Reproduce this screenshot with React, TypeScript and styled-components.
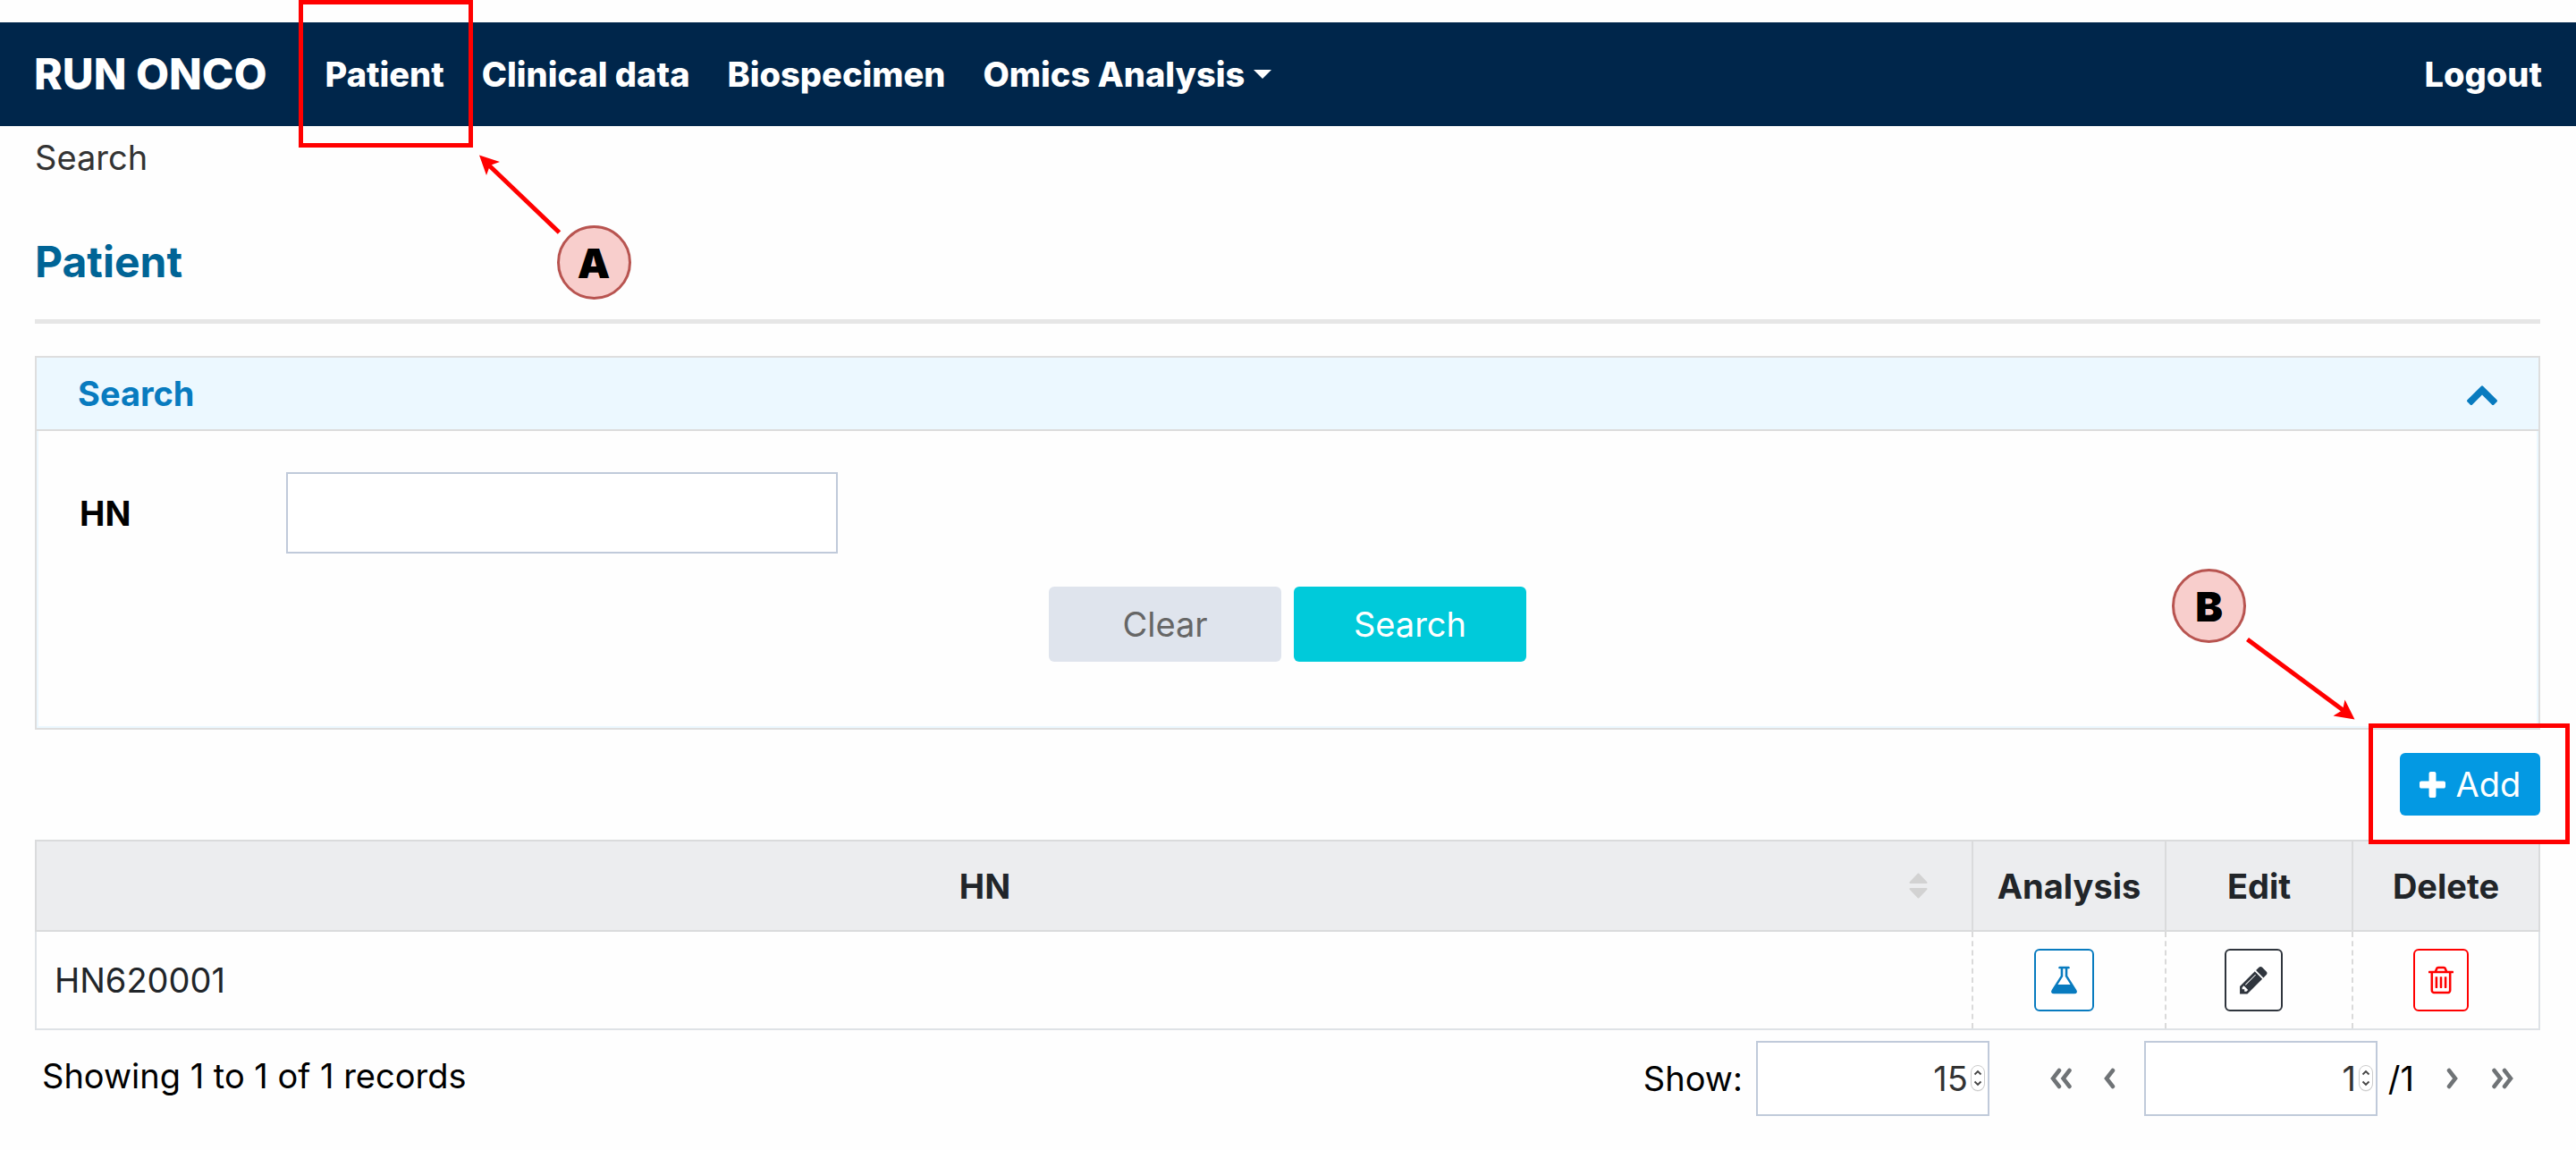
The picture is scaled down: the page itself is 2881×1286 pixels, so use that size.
import React, { useState } from "react";
import styled, { createGlobalStyle } from "styled-components";

const GlobalStyle = createGlobalStyle`
  *, *::before, *::after { box-sizing: border-box; }
  body {
    margin: 0;
    background: #fefefe;
    color: #000;
    font-family: Inter, "Open Sans", "Liberation Sans", sans-serif;
    font-size: 38px;
    line-height: 44px;
  }
  button, input { font: inherit; }
`;

const Page = styled.div`
  padding-top: 25px;
`;

/* ---------- navigation ---------- */

const Navbar = styled.nav`
  display: flex;
  align-items: stretch;
  height: 116px;
  padding: 0 38px;
  background: #00264b;
`;

const NavLink = styled.a`
  display: flex;
  align-items: center;
  gap: 10px;
  color: #fff;
  font-weight: 800;
  text-decoration: none;
  white-space: nowrap;
`;

const Brand = styled(NavLink)`
  margin-right: 65px;
  font-size: 48px;
`;

const NavList = styled.ul`
  display: flex;
  flex: 1;
  gap: 42px;
  margin: 0;
  padding: 0;
  list-style: none;
`;

const NavItem = styled.li<{ $end?: boolean }>`
  position: relative;
  display: flex;
  margin-left: ${(p) => (p.$end ? "auto" : "0")};
`;

const Caret = styled.span`
  border: 10px solid transparent;
  border-top-color: #fff;
  border-bottom: 0;
`;

/* ---------- page body ---------- */

const Content = styled.main`
  padding: 13px 40px 0 39px;
`;

const Breadcrumb = styled.div`
  color: #333;
`;

const Title = styled.h1`
  margin: 69px 0 36px;
  padding-bottom: 38px;
  border-bottom: 5px solid #e6e6e6;
  color: #006496;
  font-size: 48px;
  font-weight: 700;
  line-height: 52px;
`;

const Panel = styled.section`
  border: 2px solid #dedede;
`;

const PanelHeader = styled.header`
  display: flex;
  align-items: center;
  justify-content: space-between;
  height: 82px;
  padding: 0 46px;
  border-bottom: 2px solid #dcdcdc;
  background: #ecf8ff;
  color: #087bbf;
`;

const PanelTitle = styled.h2`
  margin: 0;
  font-size: 38px;
  font-weight: 700;
`;

const PanelToggle = styled.button`
  display: flex;
  padding: 0;
  border: 0;
  background: none;
  color: inherit;
`;

const PanelBody = styled.form`
  padding: 46px 46px 72px;
  border: 2px solid #ecf8ff;
  border-top: 0;
`;

const Field = styled.div`
  display: grid;
  grid-template-columns: 231px 617px;
  align-items: center;
`;

const FieldLabel = styled.label`
  font-weight: 700;
`;

const TextInput = styled.input`
  width: 100%;
  height: 91px;
  padding: 0 20px;
  border: 2px solid #c0cada;
  background: #fff;
  color: #333;
`;

const FormActions = styled.div`
  display: flex;
  justify-content: center;
  gap: 14px;
  margin-top: 37px;
`;

const ActionButton = styled.button<{ $primary?: boolean }>`
  width: 260px;
  height: 84px;
  border: 0;
  border-radius: 6px;
  background: ${(p) => (p.$primary ? "#00cada" : "#dfe4ed")};
  color: ${(p) => (p.$primary ? "#fff" : "#666")};
`;

const Toolbar = styled.div`
  display: flex;
  justify-content: flex-end;
  padding: 26px 0 27px;
`;

const AddSlot = styled.div`
  position: relative;
`;

const AddButton = styled.button`
  display: flex;
  align-items: center;
  justify-content: center;
  gap: 12px;
  width: 157px;
  height: 70px;
  padding: 0;
  border: 0;
  border-radius: 6px;
  background: #0399e3;
  color: #fff;
`;

/* ---------- table ---------- */

const Table = styled.table`
  width: 100%;
  border: 2px solid #dee2e6;
  border-collapse: collapse;
  table-layout: fixed;
  color: #212529;
`;

const Col = styled.col<{ $width?: number }>`
  width: ${(p) => (p.$width ? `${p.$width}px` : "auto")};
`;

const HeadCell = styled.th`
  height: 101px;
  padding: 0;
  border: 2px solid #dadbdc;
  background: #ecedef;
  font-weight: 700;
`;

const SortHeading = styled.div`
  display: flex;
  align-items: center;
  justify-content: space-between;
  padding: 0 49px 0 27px;
`;

const SortLabel = styled.span`
  flex: 1;
`;

const SortButton = styled.button`
  display: flex;
  padding: 0;
  border: 0;
  background: none;
  color: #d2d2d2;
`;

const Cell = styled.td<{ $center?: boolean }>`
  height: 110px;
  padding: 0 20px;
  border-bottom: 2px solid #dee2e6;
  border-right: 2px dashed #dadada;
  text-align: ${(p) => (p.$center ? "center" : "left")};
  &:last-child { border-right: 2px solid #dee2e6; }
`;

const RowActions = styled.div`
  display: flex;
  justify-content: center;
  padding-right: 12px;
`;

const IconButton = styled.button<{ $color: string }>`
  display: flex;
  align-items: center;
  height: 70px;
  padding: 0 15px;
  border: 2px solid ${(p) => p.$color};
  border-radius: 6px;
  background: #fff;
  color: ${(p) => p.$color};
`;

/* ---------- pager ---------- */

const Footer = styled.footer`
  display: flex;
  align-items: flex-start;
  justify-content: space-between;
  padding: 12px 12px 35px 8px;
`;

const Summary = styled.div`
  line-height: 78px;
`;

const Pager = styled.div`
  display: flex;
  align-items: center;
`;

const PagerGroup = styled.div<{ $gap: number }>`
  display: flex;
  align-items: center;
  gap: ${(p) => p.$gap}px;
`;

const Spacer = styled.span<{ $width: number }>`
  width: ${(p) => p.$width}px;
`;

const NumberBox = styled.span`
  position: relative;
  display: flex;
  width: 261px;
`;

const NumberInput = styled.input`
  width: 100%;
  height: 84px;
  padding: 0 22px 0 20px;
  border: 2px solid #c0cada;
  background: #fff;
  color: #333;
  text-align: right;
  appearance: textfield;
  &::-webkit-inner-spin-button { display: none; }
`;

const Stepper = styled.svg`
  position: absolute;
  top: 26px;
  right: 4px;
  pointer-events: none;
`;

const PageButton = styled.button`
  display: flex;
  padding: 18px;
  border: 0;
  background: none;
  color: #6f7376;
`;

/* ---------- guide marks laid over the page ---------- */

const Mark = styled.div<{ $x: number; $y: number; $w: number; $h: number }>`
  position: absolute;
  left: ${(p) => p.$x}px;
  top: ${(p) => p.$y}px;
  width: ${(p) => p.$w}px;
  height: ${(p) => p.$h}px;
  pointer-events: none;
`;

const Outline = styled(Mark)`
  border: 5px solid #f00;
`;

const Badge = styled(Mark)`
  display: flex;
  align-items: center;
  justify-content: center;
  border: 3px solid #b85450;
  border-radius: 50%;
  background: #f8cecc;
  color: #000;
  font-size: 46px;
  font-weight: 900;
`;

const ArrowSvg = styled.svg`
  display: block;
`;

/* ---------- icons ---------- */

type Glyph = { path: string; box: string; width: number; height: number };

const glyphs: Record<string, Glyph> = {
  flask: {
    box: "64 0 1664 1792", width: 33, height: 36,
    path: "M1591 1448q56 89 21.5 152.5t-140.5 63.5h-1152q-106 0-140.5-63.5t21.5-152.5l503-793v-399h-64q-26 0-45-19t-19-45 19-45 45-19h512q26 0 45 19t19 45-19 45-45 19h-64v399zm-779-725l-272 429h712l-272-429-20-31v-436h-128v436z",
  },
  pencil: {
    box: "128 0 1536 1792", width: 31, height: 36,
    path: "M491 1536l91-91-235-235-91 91v107h128v128h107zm523-928q0-22-22-22-10 0-17 7l-542 542q-7 7-7 17 0 22 22 22 10 0 17-7l542-542q7-7 7-17zm-54-192l416 416-832 832h-416v-416zm683 96q0 53-37 90l-166 166-416-416 166-165q36-38 90-38 53 0 91 38l235 234q37 39 37 91z",
  },
  trash: {
    box: "192 0 1408 1792", width: 28, height: 36,
    path: "M704 736v576q0 14-9 23t-23 9h-64q-14 0-23-9t-9-23v-576q0-14 9-23t23-9h64q14 0 23 9t9 23zm256 0v576q0 14-9 23t-23 9h-64q-14 0-23-9t-9-23v-576q0-14 9-23t23-9h64q14 0 23 9t9 23zm256 0v576q0 14-9 23t-23 9h-64q-14 0-23-9t-9-23v-576q0-14 9-23t23-9h64q14 0 23 9t9 23zm128 724v-948h-896v948q0 22 7 40.5t14.5 27 10.5 8.5h832q3 0 10.5-8.5t14.5-27 7-40.5zm-672-1076h448l-48-117q-7-9-17-11h-317q-10 2-17 11zm928 32v64q0 14-9 23t-23 9h-96v948q0 83-47 143.5t-113 60.5h-832q-66 0-113-58.5t-47-141.5v-952h-96q-14 0-23-9t-9-23v-64q0-14 9-23t23-9h309l70-167q15-37 54-63t79-26h320q40 0 79 26t54 63l70 167h309q14 0 23 9t9 23z",
  },
  plus: {
    box: "192 128 1408 1408", width: 29, height: 29,
    path: "M1600 736v192q0 40-28 68t-68 28h-416v416q0 40-28 68t-68 28h-192q-40 0-68-28t-28-68v-416h-416q-40 0-68-28t-28-68v-192q0-40 28-68t68-28h416v-416q0-40 28-68t68-28h192q40 0 68 28t28 68v416h416q40 0 68 28t28 68z",
  },
  chevronUp: {
    box: "90 0 1612 1792", width: 34, height: 38,
    path: "M1683 1331l-166 165q-19 19-45 19t-45-19l-531-531-531 531q-19 19-45 19t-45-19l-166-165q-19-19-19-45.5t19-45.5l742-741q19-19 45-19t45 19l742 741q19 19 19 45.5t-19 45.5z",
  },
};

function Icon({ name }: { name: keyof typeof glyphs }) {
  const g = glyphs[name];
  return (
    <svg width={g.width} height={g.height} viewBox={g.box} fill="currentColor" aria-hidden="true">
      <path d={g.path} />
    </svg>
  );
}

function SortIcon() {
  return (
    <svg width="21" height="29" viewBox="0 0 21 29" fill="currentColor" stroke="currentColor" strokeWidth="2" strokeLinejoin="round" aria-hidden="true">
      <path d="M1.500 11 10.500 1.500 19.500 11z" />
      <path d="M1.500 18 10.500 27.500 19.500 18z" />
    </svg>
  );
}

function Angle({ double, right }: { double?: boolean; right?: boolean }) {
  const w = double ? 24 : 13;
  return (
    <svg width={w} height="24" viewBox={`0 0 ${w} 24`} fill="none" stroke="currentColor" strokeWidth="4.500" strokeLinecap="round" strokeLinejoin="miter" aria-hidden="true">
      <g transform={right ? `translate(${w} 0) scale(-1 1)` : undefined}>
        <path d="M10 3 3 12 10 21" />
        {double && <path d="M21.500 3 14.500 12 21.500 21" />}
      </g>
    </svg>
  );
}

function NumberField({ label, value, onChange }: { label: string; value: number; onChange: (n: number) => void }) {
  return (
    <NumberBox>
      <NumberInput type="number" aria-label={label} value={value} onChange={(e) => onChange(Number(e.target.value))} />
      <Stepper width="18" height="32" viewBox="0 0 18 32" fill="none" aria-hidden="true">
        <rect x="1.500" y="2.500" width="15" height="28" rx="7.500" fill="#bbb" opacity="0.5" />
        <rect x="1.500" y="1.500" width="15" height="28" rx="7.500" fill="#fff" stroke="#ccc" />
        <path d="M5.500 11.500 9 8 12.500 11.500M5.500 19.500 9 23 12.500 19.500" stroke="#444" strokeWidth="1.800" />
      </Stepper>
    </NumberBox>
  );
}

export default function App() {
  const [hn, setHn] = useState("");
  const [pageSize, setPageSize] = useState(15);
  const [page, setPage] = useState(1);

  return (
    <>
      <GlobalStyle />
      <Page>
        <Navbar>
          <Brand href="#">RUN ONCO</Brand>
          <NavList>
            <NavItem>
              <NavLink href="#patient">Patient</NavLink>
              <Outline $x={-30} $y={-25} $w={195} $h={165} />
              <Mark $x={167} $y={145} $w={100} $h={96}>
                <ArrowSvg width="100" height="96" fill="#f00" aria-hidden="true">
                  <path d="M94.500 90 15 14" stroke="#f00" strokeWidth="5" />
                  <path d="M5 3.500 28 11 17 15 13 26z" />
                </ArrowSvg>
              </Mark>
              <Badge $x={259} $y={227} $w={83} $h={83}>A</Badge>
            </NavItem>
            <NavItem><NavLink href="#clinical">Clinical data</NavLink></NavItem>
            <NavItem><NavLink href="#biospecimen">Biospecimen</NavLink></NavItem>
            <NavItem><NavLink href="#omics">Omics Analysis<Caret /></NavLink></NavItem>
            <NavItem $end><NavLink href="#logout">Logout</NavLink></NavItem>
          </NavList>
        </Navbar>

        <Content>
          <Breadcrumb>Search</Breadcrumb>
          <Title>Patient</Title>

          <Panel>
            <PanelHeader>
              <PanelTitle>Search</PanelTitle>
              <PanelToggle type="button" aria-label="Collapse search"><Icon name="chevronUp" /></PanelToggle>
            </PanelHeader>
            <PanelBody onSubmit={(e) => e.preventDefault()}>
              <Field>
                <FieldLabel htmlFor="hn">HN</FieldLabel>
                <TextInput id="hn" type="text" value={hn} onChange={(e) => setHn(e.target.value)} />
              </Field>
              <FormActions>
                <ActionButton type="button" onClick={() => setHn("")}>Clear</ActionButton>
                <ActionButton type="submit" $primary>Search</ActionButton>
              </FormActions>
            </PanelBody>
          </Panel>

          <Toolbar>
            <AddSlot>
              <AddButton type="button"><Icon name="plus" />Add</AddButton>
              <Outline $x={-35} $y={-33} $w={225} $h={135} />
              <Mark $x={-179} $y={-137} $w={135} $h={105}>
                <ArrowSvg width="135" height="105" fill="#f00" aria-hidden="true">
                  <path d="M8.500 10 118 91" stroke="#f00" strokeWidth="5" />
                  <path d="M128.500 99.500 117.500 77.500 115 89 104.500 95.500z" />
                </ArrowSvg>
              </Mark>
              <Badge $x={-255} $y={-206} $w={83} $h={83}>B</Badge>
            </AddSlot>
          </Toolbar>

          <Table>
            <colgroup>
              <Col />
              <Col $width={216} />
              <Col $width={209} />
              <Col $width={209} />
            </colgroup>
            <thead>
              <tr>
                <HeadCell scope="col">
                  <SortHeading>
                    <SortLabel>HN</SortLabel>
                    <SortButton type="button" aria-label="Sort by HN"><SortIcon /></SortButton>
                  </SortHeading>
                </HeadCell>
                <HeadCell scope="col">Analysis</HeadCell>
                <HeadCell scope="col">Edit</HeadCell>
                <HeadCell scope="col">Delete</HeadCell>
              </tr>
            </thead>
            <tbody>
              <tr>
                <Cell>HN620001</Cell>
                <Cell $center>
                  <RowActions><IconButton type="button" aria-label="Analysis" $color="#087bbf"><Icon name="flask" /></IconButton></RowActions>
                </Cell>
                <Cell $center>
                  <RowActions><IconButton type="button" aria-label="Edit" $color="#2f353d"><Icon name="pencil" /></IconButton></RowActions>
                </Cell>
                <Cell $center>
                  <RowActions><IconButton type="button" aria-label="Delete" $color="#ff0000"><Icon name="trash" /></IconButton></RowActions>
                </Cell>
              </tr>
            </tbody>
          </Table>

          <Footer>
            <Summary>Showing 1 to 1 of 1 records</Summary>
            <Pager>
              <PagerGroup $gap={15}>
                <span>Show:</span>
                <NumberField label="Records per page" value={pageSize} onChange={setPageSize} />
              </PagerGroup>
              <Spacer $width={50} />
              <PageButton type="button" aria-label="First page"><Angle double /></PageButton>
              <PageButton type="button" aria-label="Previous page"><Angle /></PageButton>
              <Spacer $width={14} />
              <PagerGroup $gap={12}>
                <NumberField label="Page" value={page} onChange={setPage} />
                <span>/1</span>
              </PagerGroup>
              <Spacer $width={18} />
              <PagerGroup $gap={2}>
                <PageButton type="button" aria-label="Next page"><Angle right /></PageButton>
                <PageButton type="button" aria-label="Last page"><Angle double right /></PageButton>
              </PagerGroup>
            </Pager>
          </Footer>
        </Content>
      </Page>
    </>
  );
}
